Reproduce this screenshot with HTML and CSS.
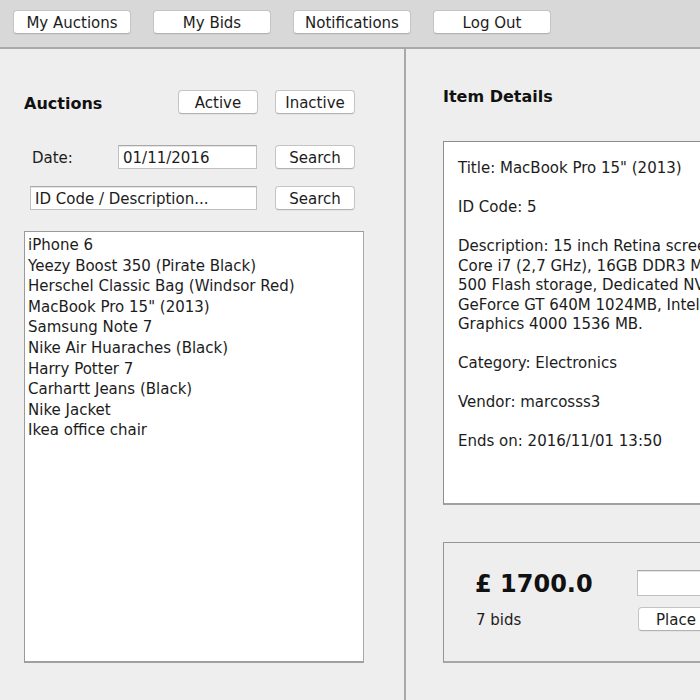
FILE: index.html
```html
<!DOCTYPE html>
<html>
<head>
<meta charset="utf-8">
<link rel="stylesheet" href="styles.css">
</head>
<body>
<div class="app">
  <div class="toolbar">
    <button class="btn tb">My Auctions</button>
    <button class="btn tb">My Bids</button>
    <button class="btn tb">Notifications</button>
    <button class="btn tb">Log Out</button>
  </div>
  <div class="main">
    <div class="left">
      <div class="row head">
        <span class="title auc">Auctions</span>
        <button class="btn small">Active</button>
        <button class="btn small">Inactive</button>
      </div>
      <div class="row date">
        <span class="lbl">Date:</span>
        <div class="field datefield">01/11/2016</div>
        <button class="btn small">Search</button>
      </div>
      <div class="row idrow">
        <div class="field idfield">ID Code / Description...</div>
        <button class="btn small">Search</button>
      </div>
      <ul class="list">
        <li>iPhone 6</li>
        <li>Yeezy Boost 350 (Pirate Black)</li>
        <li>Herschel Classic Bag (Windsor Red)</li>
        <li>MacBook Pro 15" (2013)</li>
        <li>Samsung Note 7</li>
        <li>Nike Air Huaraches (Black)</li>
        <li>Harry Potter 7</li>
        <li>Carhartt Jeans (Black)</li>
        <li>Nike Jacket</li>
        <li>Ikea office chair</li>
      </ul>
    </div>
    <div class="right">
      <div class="title details-title">Item Details</div>
      <div class="details">
        <p>Title: MacBook Pro 15" (2013)</p>
        <p>ID Code: 5</p>
        <p>Description: 15 inch Retina screen,<br>Core i7 (2,7 GHz), 16GB DDR3 Memory,<br>500 Flash storage, Dedicated NVIDIA<br>GeForce GT 640M 1024MB, Intel HD<br>Graphics 4000 1536 MB.</p>
        <p>Category: Electronics</p>
        <p>Vendor: marcosss3</p>
        <p>Ends on: 2016/11/01 13:50</p>
      </div>
      <div class="bidbox">
        <div class="price-col">
          <div class="price">£ 1700.0</div>
          <div class="bids">7 bids</div>
        </div>
        <div class="action-col">
          <div class="field bidfield"></div>
          <button class="btn place">Place Bid</button>
        </div>
      </div>
    </div>
  </div>
</div>
</body>
</html>
```

FILE: styles.css
```css
* { box-sizing: border-box; }
html, body {
  margin: 0;
  padding: 0;
  width: 700px;
  height: 700px;
  overflow: hidden;
  background: #eeeeee;
  font-family: "DejaVu Sans", "Lucida Grande", sans-serif;
  font-size: 15px;
  color: #1c1c1c;
}
.app { width: 700px; height: 700px; display: flex; flex-direction: column; }
.toolbar {
  height: 49px;
  background: #d8d8d8;
  border-bottom: 2px solid #a9a9a9;
  display: flex;
  align-items: flex-start;
  padding: 10px 0 0 13px;
  gap: 22px;
  flex: none;
}
.btn {
  font-family: inherit;
  font-size: 15px;
  color: #1c1c1c;
  background: #ffffff;
  border: 1px solid #c4c4c4;
  border-bottom-color: #b2b2b2;
  border-radius: 4px;
  box-shadow: 0 1px 0 rgba(0,0,0,0.04);
  padding: 2px 0 0 0;
  line-height: 1;
  display: flex;
  align-items: center;
  justify-content: center;
}
.tb { width: 118px; height: 24px; }
.small { width: 80px; height: 24px; }
.main { flex: 1; display: flex; min-height: 0; }
.left {
  width: 406px;
  flex: none;
  border-right: 2px solid #a9a9a9;
  padding: 41px 0 0 0;
}
.row { display: flex; align-items: center; }
.head { padding-left: 24px; }
.title { font-weight: bold; font-size: 16px; color: #111; }
.auc { width: 154px; position: relative; top: 1px; }
.head .btn + .btn { margin-left: 17px; }
.date { margin-top: 31px; padding-left: 32px; }
.lbl { width: 86px; padding-top: 1px; }
.field {
  background: #fff;
  border: 1px solid #c0c0c0;
  border-top-color: #a8a8a8;
  height: 24px;
  display: flex;
  align-items: center;
  padding: 2px 0 0 4px;
  font-size: 15px;
  line-height: 1;
  box-shadow: inset 0 1px 0 #e6e6e6;
}
.datefield { width: 139px; margin-right: 18px; }
.idrow { margin-top: 17px; padding-left: 30px; }
.idfield { width: 227px; margin-right: 18px; }
.list {
  list-style: none;
  margin: 21px 0 0 24px;
  padding: 3px 0 0 3px;
  width: 340px;
  height: 432px;
  background: #fff;
  border: 1px solid #9a9a9a;
  border-right-color: #a8a8a8;
  border-bottom: 2px solid #a0a0a0;
  line-height: 20.6px;
}
.right {
  flex: 1;
  min-width: 0;
  overflow: hidden;
  padding: 38px 0 0 37px;
}
.details-title { line-height: 20px; }
.details {
  margin-top: 34px;
  width: 330px;
  height: 364px;
  background: #fff;
  border: 1px solid #8e8e8e;
  border-bottom: 2px solid #a0a0a0;
  padding: 17px 0 0 14px;
  line-height: 19.5px;
  white-space: nowrap;
  overflow: hidden;
}
.details p { margin: 0 0 19.5px 0; }
.bidbox {
  margin-top: 37px;
  width: 330px;
  height: 121px;
  border: 1px solid #959595;
  border-bottom: 2px solid #a6a6a6;
  display: flex;
  padding: 27px 0 0 31px;
}
.price-col { width: 163px; flex: none; }
.price { font-weight: bold; font-size: 24px; line-height: 28px; color: #111; }
.bids { margin-top: 12px; line-height: 20px; padding-left: 1px; }
.action-col { display: flex; flex-direction: column; }
.bidfield { width: 120px; height: 26px; margin-left: -1px; margin-top: 0; }
.place { width: 120px; height: 24px; margin-top: 11px; justify-content: flex-start; padding-left: 17px; }
```
